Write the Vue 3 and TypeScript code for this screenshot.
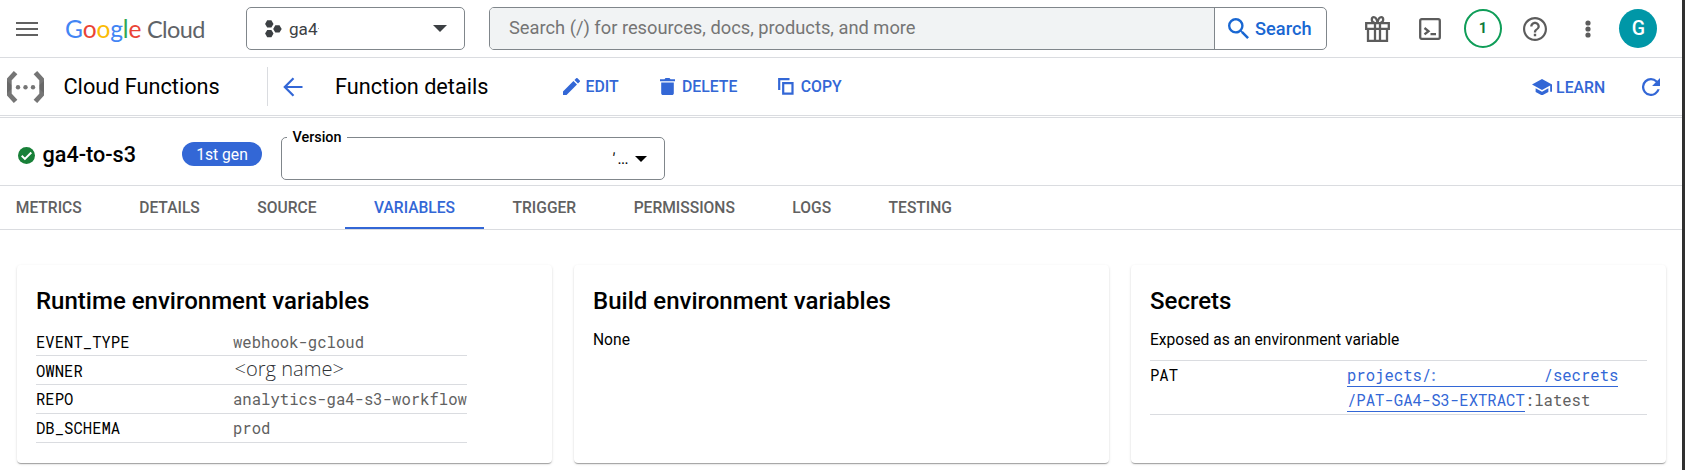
<script setup lang="ts">
interface Variable {
  name: string
  value: string
  plain?: boolean
}

const tabs: string[] = ['METRICS', 'DETAILS', 'SOURCE', 'VARIABLES', 'TRIGGER', 'PERMISSIONS', 'LOGS', 'TESTING']
const activeTab = 'VARIABLES'

const logoLetters: { char: string; tone: string }[] = [
  { char: 'G', tone: 'blue' },
  { char: 'o', tone: 'red' },
  { char: 'o', tone: 'yellow' },
  { char: 'g', tone: 'blue' },
  { char: 'l', tone: 'green' },
  { char: 'e', tone: 'red' },
]

const runtimeVariables: Variable[] = [
  { name: 'EVENT_TYPE', value: 'webhook-gcloud' },
  { name: 'OWNER', value: '<org name>', plain: true },
  { name: 'REPO', value: 'analytics-ga4-s3-workflow' },
  { name: 'DB_SCHEMA', value: 'prod' },
]
</script>

<template>
  <div class="console">
    <header class="topbar">
      <svg class="menu" viewBox="0 0 22 16"><path d="M0 2h22M0 8h22M0 14h22" /></svg>
      <div class="brand">
        <span class="google"><span v-for="(l, i) in logoLetters" :key="i" :class="l.tone">{{ l.char }}</span></span>
        <span class="cloud">Cloud</span>
      </div>
      <button class="project">
        <svg class="hexes" viewBox="0 0 17 18">
          <path d="M2.2 0.3h4.2l2.1 3.6-2.1 3.6H2.2L.1 3.9z" />
          <path d="M2.2 9.9h4.2l2.1 3.7-2.1 3.7H2.2L.1 13.6z" />
          <path d="M10.3 5.2h4.2l2.2 3.7-2.2 3.7h-4.2L8.2 8.9z" />
        </svg>
        <span class="project-name">ga4</span><i class="speck"></i>
        <svg class="caret" viewBox="0 0 14 7"><path d="M0 0h14L7 7z" /></svg>
      </button>
      <div class="search">
        <div class="search-field">Search (/) for resources, docs, products, and more</div>
        <button class="search-button">
          <svg viewBox="3 3 17.5 17.5"><path d="M15.5 14h-.79l-.28-.27A6.47 6.47 0 0 0 16 9.5 6.5 6.5 0 1 0 9.5 16c1.61 0 3.09-.59 4.23-1.57l.27.28v.79l5 4.99L20.49 19l-4.99-5zm-6 0C7.01 14 5 11.99 5 9.5S7.01 5 9.5 5 14 7.01 14 9.5 11.99 14 9.5 14z" /></svg>
          <span>Search</span>
        </button>
      </div>
      <div class="tools">
        <svg class="gift" viewBox="0 0 25 26">
          <path d="M1.2 7.2h22.6v5.6H1.2zM3 12.8h19V24.8H3zM10 7.2v17.6M15 7.2v17.6" />
          <path d="M12.5 6.5C11.5 2.2 10.2 1.2 8.8 1.2 7.2 1.2 6.8 2.3 6.8 3.6c0 1.7 1 3 2.8 3M12.5 6.5C13.5 2.2 14.8 1.2 16.2 1.2c1.6 0 2 1.1 2 2.4 0 1.7-1 3-2.8 3" />
        </svg>
        <svg class="shell" viewBox="0 0 22 22">
          <rect x="1.2" y="1.2" width="19.6" height="19.6" rx="1.5" />
          <path d="M5.5 10l4 3.2-4 3.2M11.5 16.2h5.5" />
        </svg>
        <span class="notice">1</span>
        <svg class="help" viewBox="2 2 20 20"><path d="M11 18h2v-2h-2v2zm1-16C6.48 2 2 6.48 2 12s4.48 10 10 10 10-4.48 10-10S17.52 2 12 2zm0 18.2c-4.52 0-8.2-3.68-8.2-8.2S7.48 3.8 12 3.8s8.2 3.68 8.2 8.2-3.68 8.2-8.2 8.2zM12 6c-2.21 0-4 1.79-4 4h1.9c0-1.15.95-2.1 2.1-2.1s2.1.95 2.1 2.1c0 2-3.05 1.75-3.05 5h1.9c0-2.25 3.05-2.5 3.05-5 0-2.21-1.79-4-4-4z" /></svg>
        <svg class="more" viewBox="0 0 6 18"><circle cx="3" cy="3" r="2.6" /><circle cx="3" cy="9" r="2.6" /><circle cx="3" cy="15" r="2.6" /></svg>
        <span class="avatar">G</span>
      </div>
    </header>

    <div class="toolbar">
      <svg class="product-icon" viewBox="0 0 37 32">
        <path class="bracket" d="M8.6 1.6 2.3 8.5v15l6.3 6.9M28.4 1.6l6.3 6.9v15l-6.3 6.9" />
        <path class="fold" d="M0 10l4.5 4v4L0 22zM37 10l-4.5 4v4l4.5 4z" />
        <circle cx="11" cy="16.2" r="2.2" /><circle cx="18.5" cy="16.2" r="2.2" /><circle cx="26" cy="16.2" r="2.2" />
      </svg>
      <span class="product">Cloud Functions</span>
      <div class="page-head">
        <svg class="back" viewBox="0 0 20 20"><path d="M19.5 10H2M10.5 1.2 1.8 10l8.7 8.8" /></svg>
        <span class="page-title">Function details</span>
      </div>
      <button class="action edit">
        <svg viewBox="3 3 18 18"><path d="M3 17.25V21h3.75L17.81 9.94l-3.75-3.75L3 17.25zM20.71 7.04a.996.996 0 0 0 0-1.41l-2.34-2.34a.996.996 0 0 0-1.41 0l-1.83 1.83 3.75 3.75 1.83-1.83z" /></svg>EDIT
      </button>
      <button class="action delete">
        <svg viewBox="0 0 15 17"><path d="M0 1.2h4.5L5.5 0h4l1 1.2H15v2H0zM1.2 4.6h12.6v10.6c0 1-.8 1.8-1.8 1.8H3c-1 0-1.8-.8-1.8-1.8z" /></svg>DELETE
      </button>
      <button class="action copy">
        <svg viewBox="0 0 16 17"><path class="line" d="M1.2 12V1.2h10.3M5.2 5.2h9.3v10.5H5.2z" /></svg>COPY
      </button>
      <button class="action learn">
        <svg viewBox="1 3 22 18"><path d="M5 13.18v4L12 21l7-3.82v-4L12 17l-7-3.82zM12 3 1 9l11 6 9-4.91V17h2V9L12 3z" /></svg>LEARN
      </button>
      <svg class="refresh" viewBox="4 4 16 16"><path d="M17.65 6.35A7.958 7.958 0 0 0 12 4a8 8 0 1 0 7.73 10h-2.08A6 6 0 1 1 12 6c1.66 0 3.14.69 4.22 1.78L13 11h7V4l-2.35 2.35z" /></svg>
    </div>

    <section class="summary">
      <svg class="status" viewBox="0 0 17 17"><circle cx="8.5" cy="8.5" r="8.5" /><path d="M3.7 8.8l3.2 3.1 6.4-6.4" /></svg>
      <h1>ga4-to-s3</h1>
      <span class="chip">1st gen</span>
      <fieldset class="version">
        <legend>Version</legend>
        <div class="version-value">
          <span class="tick">'</span><span class="dots">...</span>
          <svg viewBox="0 0 12 6"><path d="M0 0h12L6 6z" /></svg>
        </div>
      </fieldset>
    </section>

    <nav class="tabs">
      <a v-for="tab in tabs" :key="tab" :class="{ active: tab === activeTab }">{{ tab }}</a>
    </nav>

    <main class="cards">
      <section class="card">
        <h2>Runtime environment variables</h2>
        <dl class="variables">
          <div v-for="v in runtimeVariables" :key="v.name">
            <dt>{{ v.name }}</dt>
            <dd :class="{ plain: v.plain }">{{ v.value }}</dd>
          </div>
        </dl>
      </section>
      <section class="card">
        <h2>Build environment variables</h2>
        <p>None</p>
      </section>
      <section class="card">
        <h2>Secrets</h2>
        <p>Exposed as an environment variable</p>
        <dl class="secrets">
          <dt>PAT</dt>
          <dd>
            <a>projects/<span class="project-id">:</span>/secrets</a><br>
            <a>/PAT-GA4-S3-EXTRACT</a>:latest
          </dd>
        </dl>
      </section>
    </main>
  </div>
</template>

<style>
body {
  margin: 0;
  background: #fff;
  overflow: hidden;
}
</style>

<style scoped>
.console {
  box-sizing: border-box;
  height: 470px;
  border-right: 3px solid #303030;
  font-family: Roboto, "Liberation Sans", sans-serif;
  color: #000;
  white-space: nowrap;
  overflow: hidden;
}
svg {
  display: block;
  flex: none;
  fill: currentColor;
}
button {
  display: flex;
  align-items: center;
  padding: 0;
  border: 0;
  background: none;
  font: inherit;
  color: inherit;
}

/* Top bar */
.topbar {
  display: flex;
  align-items: center;
  box-sizing: border-box;
  height: 58px;
  padding-left: 16.4px;
  border-bottom: 1px solid #dadce0;
}
.menu {
  width: 22px;
  height: 16px;
}
.menu path {
  fill: none;
  stroke: #616161;
  stroke-width: 2;
}
.brand {
  display: flex;
  align-items: baseline;
  box-sizing: border-box;
  width: 207.6px;
  padding-left: 26.6px;
  font-family: Lato, sans-serif;
  line-height: 30px;
}
.google {
  width: 82px;
  font-size: 24.5px;
  letter-spacing: -0.1px;
}
.cloud {
  font-size: 23.5px;
  letter-spacing: -0.6px;
  color: #5f6368;
}
.blue { color: #4285f4; }
.red { color: #ea4335; }
.yellow { color: #fbbc04; }
.green { color: #34a853; }
.project {
  box-sizing: border-box;
  width: 219px;
  height: 43px;
  padding: 0 17px 0 18px;
  border: 1px solid #80868b;
  border-radius: 5px;
  color: #3c4043;
}
.hexes {
  width: 17px;
  height: 18px;
}
.project-name {
  margin-left: 7px;
  font-size: 17.1px;
}
.speck {
  width: 1px;
  height: 1px;
  background: #9aa0a6;
}
.caret {
  width: 14px;
  height: 7px;
  margin-left: auto;
}
.search {
  display: flex;
  box-sizing: border-box;
  width: 838px;
  height: 43px;
  margin-left: 24px;
  border: 1px solid #80868b;
  border-radius: 5px;
  overflow: hidden;
}
.search-field {
  flex: 1;
  padding-left: 19px;
  background: #f1f3f4;
  font-size: 18.3px;
  line-height: 39px;
  color: #757575;
}
.search-button {
  box-sizing: border-box;
  width: 112px;
  padding-left: 13.5px;
  border-left: 1px solid #80868b;
  font-size: 18.2px;
  font-weight: 500;
  color: #1967d2;
}
.search-button svg {
  width: 21px;
  height: 21px;
  margin-right: 5.6px;
}
.tools {
  display: flex;
  align-items: center;
  padding-left: 38px;
  color: #5c5c5c;
}
.gift {
  width: 25px;
  height: 26px;
}
.gift path,
.shell rect,
.shell path {
  fill: none;
  stroke: currentColor;
  stroke-width: 2.3;
}
.shell {
  width: 22px;
  height: 22px;
  margin-left: 29px;
}
.notice,
.avatar {
  display: flex;
  align-items: center;
  justify-content: center;
  box-sizing: border-box;
  width: 38px;
  height: 39px;
  border-radius: 50%;
}
.notice {
  margin-left: 23px;
  padding-bottom: 1px;
  border: 2.8px solid #0f9d58;
  font-size: 14.5px;
  font-weight: 700;
  color: #0d7a3c;
}
.help {
  width: 24px;
  height: 24px;
  margin-left: 21.5px;
}
.more {
  width: 6px;
  height: 18px;
  margin-left: 38px;
}
.avatar {
  margin-left: 28px;
  background: #0097a7;
  font-size: 19.5px;
  font-weight: 500;
  color: #fff;
}

/* Product toolbar */
.toolbar {
  display: flex;
  align-items: center;
  box-sizing: border-box;
  height: 60px;
  padding: 0 22px 0 7px;
  border-bottom: 3px double #dadce0;
  font-size: 21.7px;
}
.product-icon {
  width: 37px;
  height: 32px;
  color: #757575;
}
.bracket {
  fill: none;
  stroke: currentColor;
  stroke-width: 4.8;
}
.fold {
  fill: #5c5c5c;
  opacity: 0.5;
}
.product {
  width: 203.5px;
  margin-left: 19.5px;
}
.page-head {
  display: flex;
  align-items: center;
  box-sizing: border-box;
  width: 295.5px;
  height: 39px;
  padding-left: 15px;
  border-left: 1px solid #dadce0;
}
.back {
  width: 20px;
  height: 20px;
  margin-right: 32px;
}
.back path,
.line {
  fill: none;
  stroke: #3367d6;
  stroke-width: 2.2;
}
.action {
  font-size: 15.8px;
  font-weight: 500;
  color: #3367d6;
}
.action svg {
  width: 17px;
  height: 17px;
}
.edit svg { margin-right: 6px; }
.delete { margin-left: 41.8px; }
.delete svg { width: 15px; margin-right: 6.6px; }
.copy { margin-left: 41px; }
.copy svg { width: 16px; margin-right: 6.3px; }
.learn { margin-left: auto; padding-top: 1px; }
.learn svg { width: 20px; height: 16.5px; margin-right: 4px; }
.refresh {
  width: 18px;
  height: 18px;
  margin-left: 36.8px;
  color: #3367d6;
}

/* Function summary */
.summary {
  display: flex;
  box-sizing: border-box;
  height: 68px;
  padding-left: 18px;
  border-bottom: 1px solid #dadce0;
}
.status {
  width: 17px;
  height: 17px;
  margin-top: 29px;
  color: #188038;
}
.status path {
  fill: none;
  stroke: #fff;
  stroke-width: 2;
}
h1 {
  width: 139.5px;
  margin: 22px 0 0 7.5px;
  font-size: 21.6px;
  font-weight: 500;
  line-height: 30px;
}
.chip {
  width: 80px;
  height: 24px;
  margin-top: 24px;
  border-radius: 12px;
  background: #3367d6;
  font-size: 15.7px;
  line-height: 25px;
  text-align: center;
  color: #fff;
}
.version {
  box-sizing: border-box;
  width: 384px;
  height: 51px;
  min-width: 0;
  margin: 11px 0 0 19px;
  padding: 0 17px 0 5px;
  border: 1px solid #80868b;
  border-radius: 5px;
}
.version legend {
  height: 17px;
  padding: 0 5px 0 5.5px;
  font-size: 14.4px;
  font-weight: 500;
  line-height: 17px;
}
.version-value {
  display: flex;
  align-items: center;
  justify-content: flex-end;
  height: 26px;
  font-size: 15.6px;
}
.tick {
  margin-right: 3px;
  transform: skewX(-8deg);
}
.dots {
  letter-spacing: -0.6px;
}
.version-value svg {
  width: 12px;
  height: 6px;
  margin-left: 7px;
}

/* Tabs */
.tabs {
  display: flex;
  box-sizing: border-box;
  height: 44px;
  margin-left: -13px;
  border-bottom: 1px solid #dadce0;
  font-size: 15.6px;
  font-weight: 500;
  line-height: 42px;
  color: #616161;
}
.tabs a {
  padding: 1px 28.75px 0;
}
.tabs .active {
  color: #3367d6;
  box-shadow: inset 0 -2px #3367d6;
}

/* Cards */
.cards {
  display: grid;
  grid-template-columns: repeat(3, 535px);
  gap: 22px;
  padding: 35px 0 0 17px;
}
.card {
  box-sizing: border-box;
  height: 198px;
  padding: 21px 19px 0;
  border-radius: 4px;
  box-shadow: 0 2px 1px -1px rgba(0, 0, 0, 0.2), 0 1px 1px rgba(0, 0, 0, 0.14), 0 1px 3px rgba(0, 0, 0, 0.12);
}
h2 {
  margin: 0;
  font-size: 24.03px;
  font-weight: 500;
  line-height: 30px;
}
.card p {
  margin: 13px 0 0;
  font-size: 15.6px;
  line-height: 22px;
}
dl,
dd {
  margin: 0;
}
.variables,
.secrets {
  font-family: "Roboto Mono", "DejaVu Sans Mono", monospace;
  font-size: 15.6px;
}
.variables {
  width: 431px;
  padding-top: 11px;
}
.variables div {
  display: flex;
  box-sizing: border-box;
  height: 29px;
  border-bottom: 1px solid #dadce0;
  line-height: 30px;
}
.variables div:nth-child(n + 3) {
  line-height: 29px;
}
dt {
  width: 197px;
  flex: none;
}
dd {
  color: #616161;
}
.variables .plain {
  padding-left: 1.5px;
  font-family: "Open Sans", sans-serif;
  font-size: 20.1px;
  font-weight: 300;
  line-height: 25px;
  color: #303236;
}
.secrets {
  display: flex;
  box-sizing: border-box;
  height: 55px;
  margin-top: 9px;
  border: solid #dadce0;
  border-width: 1px 0;
  padding-top: 2px;
  line-height: 25px;
}
.secrets a {
  padding-bottom: 1px;
  border-bottom: 1px solid #3367d6;
  color: #3367d6;
}
.project-id {
  display: inline-block;
  width: 115.3px;
  margin-left: -3px;
  opacity: 0.8;
}
</style>
